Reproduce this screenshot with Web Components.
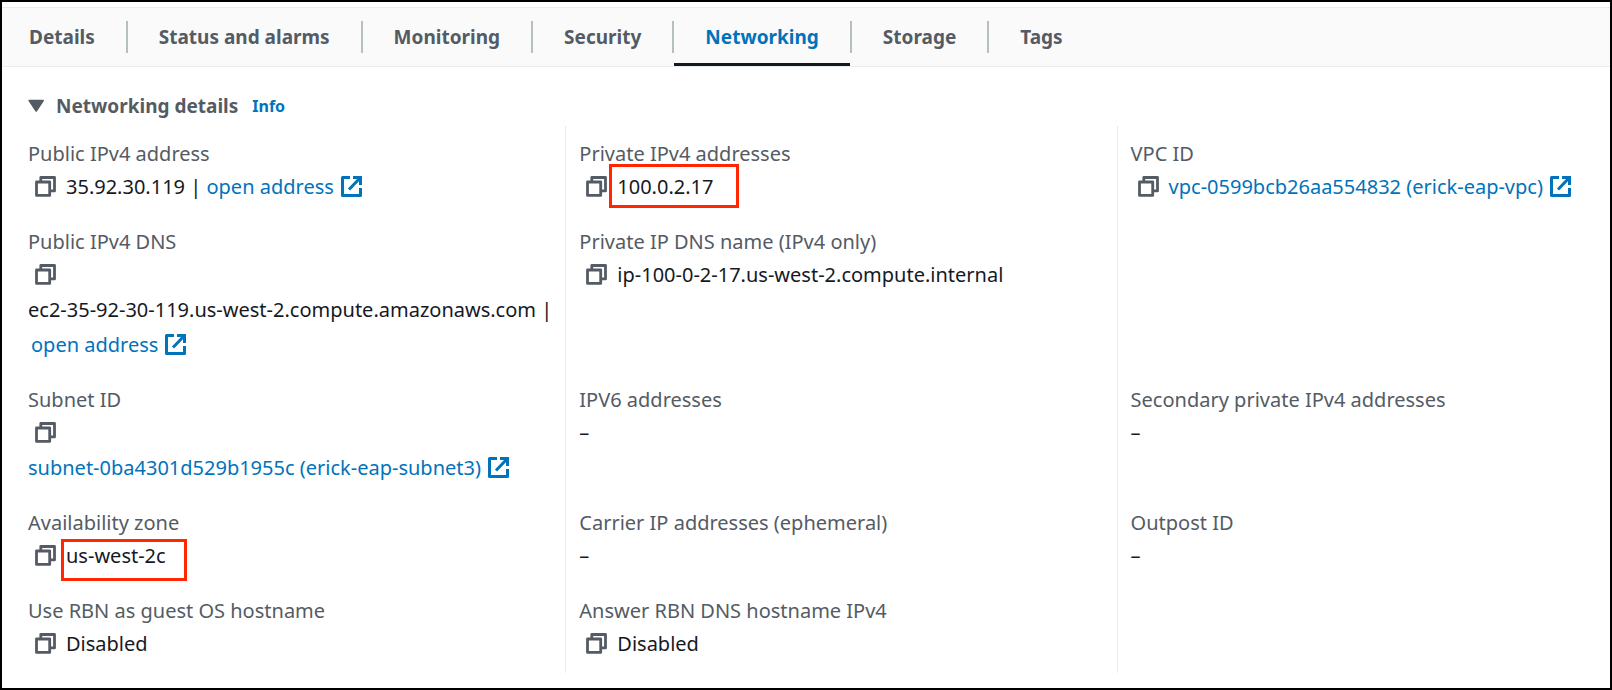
<!DOCTYPE html>
<html lang="en">
<head>
  <meta charset="UTF-8">
  <meta name="viewport" content="width=device-width, initial-scale=1.0">
  <title>Instance networking</title>
  <style>
    :root {
      --text: #16191f;
      --muted: #545b64;
      --link: #0073bb;
      --line: #eaeded;
    }
    body {
      margin: 0;
      font-family: "Noto Sans", "Open Sans", sans-serif;
      font-size: 20px;
      color: var(--text);
      background: #fff;
    }
  </style>
</head>
<body>
  <instance-panel>
    <tab-bar slot="tabs">
      <tab-item>Details</tab-item>
      <tab-item>Status and alarms</tab-item>
      <tab-item>Monitoring</tab-item>
      <tab-item>Security</tab-item>
      <tab-item active>Networking</tab-item>
      <tab-item>Storage</tab-item>
      <tab-item>Tags</tab-item>
    </tab-bar>

    <expandable-section heading="Networking details">
      <detail-columns>
        <detail-column>
          <detail-field label="Public IPv4 address">
            <copy-button></copy-button>
            <span>35.92.30.119 |&nbsp;</span>
            <external-link>open address</external-link>
          </detail-field>
          <detail-field label="Public IPv4 DNS" stacked>
            <copy-button></copy-button>
            <span>ec2-35-92-30-119.us-west-2.compute.amazonaws.com |</span>
            <external-link indent>open address</external-link>
          </detail-field>
          <detail-field label="Subnet ID" stacked>
            <copy-button></copy-button>
            <external-link>subnet-0ba4301d529b1955c (erick-eap-subnet3)</external-link>
          </detail-field>
          <detail-field label="Availability zone">
            <copy-button></copy-button>
            <marked-value class="zone">us-west-2c</marked-value>
          </detail-field>
          <detail-field label="Use RBN as guest OS hostname">
            <copy-button></copy-button>
            <span>Disabled</span>
          </detail-field>
        </detail-column>

        <detail-column>
          <detail-field label="Private IPv4 addresses">
            <copy-button></copy-button>
            <marked-value class="address">100.0.2.17</marked-value>
          </detail-field>
          <detail-field label="Private IP DNS name (IPv4 only)">
            <copy-button></copy-button>
            <span>ip-100-0-2-17.us-west-2.compute.internal</span>
          </detail-field>
          <detail-field label="IPV6 addresses">–</detail-field>
          <detail-field label="Carrier IP addresses (ephemeral)">–</detail-field>
          <detail-field label="Answer RBN DNS hostname IPv4">
            <copy-button></copy-button>
            <span>Disabled</span>
          </detail-field>
        </detail-column>

        <detail-column>
          <detail-field label="VPC ID" class="two-rows">
            <copy-button></copy-button>
            <external-link>vpc-0599bcb26aa554832 (erick-eap-vpc)</external-link>
          </detail-field>
          <detail-field label="Secondary private IPv4 addresses">–</detail-field>
          <detail-field label="Outpost ID">–</detail-field>
        </detail-column>
      </detail-columns>
    </expandable-section>
  </instance-panel>

  <script>
    class InstancePanel extends HTMLElement {
      constructor() {
        super();
        this.attachShadow({ mode: 'open' });
        this.shadowRoot.innerHTML = `
          <style>
            :host {
              display: block;
              box-sizing: border-box;
              min-height: 100vh;
              padding-top: 5px;
              border: 2px solid #000;
            }
          </style>
          <slot name="tabs"></slot>
          <slot></slot>
        `;
      }
    }

    class TabBar extends HTMLElement {
      constructor() {
        super();
        this.attachShadow({ mode: 'open' });
        this.shadowRoot.innerHTML = `
          <style>
            :host {
              display: block;
              background: #fafafa;
              border-top: 1px solid var(--line);
              border-bottom: 1px solid var(--line);
            }
            nav {
              display: flex;
              padding-left: 25px;
            }
            ::slotted(tab-item:first-child) {
              --tab-start: 2px;
            }
            ::slotted(tab-item:last-child) {
              --divider: transparent;
            }
          </style>
          <nav role="tablist"><slot></slot></nav>
        `;
      }
    }

    class TabItem extends HTMLElement {
      constructor() {
        super();
        this.attachShadow({ mode: 'open' });
        this.shadowRoot.innerHTML = `
          <style>
            :host {
              display: flex;
              align-items: center;
              height: 58px;
            }
            button {
              height: 58px;
              padding: 0 31px 0 var(--tab-start, 31px);
              border: 0;
              border-top: 3px solid transparent;
              border-bottom: 3px solid transparent;
              background: none;
              color: var(--muted);
              font: 700 19px/26px "Noto Sans", "Open Sans", sans-serif;
              cursor: pointer;
            }
            :host([active]) button {
              color: var(--link);
              border-bottom-color: var(--text);
            }
            .divider {
              width: 2px;
              height: 32px;
              background: var(--divider, #b4c0c2);
            }
          </style>
          <button type="button" role="tab"><slot></slot></button>
          <span class="divider"></span>
        `;
        this.shadowRoot.querySelector('button')
          .setAttribute('aria-selected', this.hasAttribute('active'));
      }
    }

    class ExpandableSection extends HTMLElement {
      constructor() {
        super();
        this.attachShadow({ mode: 'open' });
        this.isOpen = true;
        this.shadowRoot.innerHTML = `
          <style>
            :host {
              display: block;
              padding: 24px 14px 14px 12px;
            }
            header {
              display: flex;
              align-items: center;
              height: 30px;
              padding-left: 14px;
              margin-bottom: 5px;
            }
            .toggle {
              display: flex;
              align-items: center;
              gap: 12px;
              padding: 0;
              border: 0;
              background: none;
              color: var(--muted);
              font: 700 19px/30px "Noto Sans", "Open Sans", sans-serif;
              cursor: pointer;
            }
            a {
              margin-left: 14px;
              color: var(--link);
              font-size: 16px;
              font-weight: 700;
              line-height: 30px;
              text-decoration: none;
            }
          </style>
          <header>
            <button class="toggle" type="button" aria-expanded="true">
              <svg width="16" height="14" viewBox="0 0 16 14" aria-hidden="true">
                <path d="M1.2 1.5h14l-7 10.5z" fill="currentColor" stroke="currentColor" stroke-width="1.6" stroke-linejoin="round"/>
              </svg>
              <span></span>
            </button>
            <a href="#info">Info</a>
          </header>
          <div class="content"><slot></slot></div>
        `;
        const toggle = this.shadowRoot.querySelector('.toggle');
        toggle.querySelector('span').textContent = this.getAttribute('heading');
        toggle.addEventListener('click', () => this.toggle());
      }

      // Show or hide the section body
      toggle() {
        this.isOpen = !this.isOpen;
        this.shadowRoot.querySelector('.toggle').setAttribute('aria-expanded', this.isOpen);
        this.shadowRoot.querySelector('.content').hidden = !this.isOpen;
      }
    }

    class DetailColumns extends HTMLElement {
      constructor() {
        super();
        this.attachShadow({ mode: 'open' });
        this.shadowRoot.innerHTML = `
          <style>
            :host {
              display: grid;
              grid-template-columns: minmax(0, 46fr) minmax(0, 46fr) minmax(0, 40fr);
              grid-template-rows: repeat(5, auto);
              row-gap: 22px;
            }
            ::slotted(detail-column:not(:first-child)) {
              box-shadow: inset 1px 0 var(--line);
            }
          </style>
          <slot></slot>
        `;
      }
    }

    // Shares its rows with the other columns, so the fields line up
    class DetailColumn extends HTMLElement {
      constructor() {
        super();
        this.attachShadow({ mode: 'open' });
        this.shadowRoot.innerHTML = `
          <style>
            :host {
              display: grid;
              grid-row: 1 / -1;
              grid-template-rows: subgrid;
              padding: 12px 10px 12px 14px;
            }
            ::slotted(.two-rows) {
              grid-row: span 2;
            }
          </style>
          <slot></slot>
        `;
      }
    }

    class DetailField extends HTMLElement {
      constructor() {
        super();
        this.attachShadow({ mode: 'open' });
        this.shadowRoot.innerHTML = `
          <style>
            :host {
              display: block;
              white-space: nowrap;
            }
            .label {
              color: var(--muted);
              line-height: 31px;
            }
            .value {
              display: flex;
              flex-wrap: wrap;
              line-height: 35px;
            }
            :host([stacked]) .value {
              flex-direction: column;
              align-items: flex-start;
            }
          </style>
          <div class="label"></div>
          <div class="value"><slot></slot></div>
        `;
        this.shadowRoot.querySelector('.label').textContent = this.getAttribute('label');
      }
    }

    class CopyButton extends HTMLElement {
      constructor() {
        super();
        this.attachShadow({ mode: 'open' });
        this.shadowRoot.innerHTML = `
          <style>
            :host {
              display: flex;
              align-items: center;
              height: 35px;
              padding: 0 10px 0 7px;
            }
            button {
              display: flex;
              padding: 0;
              border: 0;
              background: none;
              color: var(--muted);
              cursor: pointer;
            }
          </style>
          <button type="button" aria-label="Copy">
            <svg width="21" height="21" viewBox="0 0 21 21" fill="none" stroke="currentColor" stroke-width="2.8" stroke-linejoin="round" aria-hidden="true">
              <path d="M1.5 6h13.2v13.4H1.5z"/>
              <path d="M5.8 6V1.5h13.7v13.4H15"/>
            </svg>
          </button>
        `;
      }
    }

    class ExternalLink extends HTMLElement {
      constructor() {
        super();
        this.attachShadow({ mode: 'open' });
        this.shadowRoot.innerHTML = `
          <style>
            :host {
              display: block;
            }
            :host([indent]) {
              padding-left: 3px;
            }
            a {
              display: flex;
              align-items: center;
              gap: 7px;
              color: var(--link);
              text-decoration: none;
            }
          </style>
          <a href="#open">
            <span><slot></slot></span>
            <svg width="21" height="21" viewBox="0 0 21 21" fill="none" stroke="currentColor" stroke-width="3" aria-hidden="true">
              <path d="M9 1.5H1.5v18h18V12" stroke-linejoin="round"/>
              <path d="M12 1.5h7.5V9M19 2L8 13.5"/>
            </svg>
          </a>
        `;
      }
    }

    // Value with a red frame drawn over it
    class MarkedValue extends HTMLElement {
      constructor() {
        super();
        this.attachShadow({ mode: 'open' });
        this.shadowRoot.innerHTML = `
          <style>
            :host {
              display: block;
              position: relative;
            }
            .frame {
              position: absolute;
              box-sizing: border-box;
              border: 3px solid #ff2600;
              pointer-events: none;
            }
            :host(.address) .frame {
              left: -8px;
              top: -5px;
              width: 130px;
              height: 44px;
            }
            :host(.zone) .frame {
              left: -5px;
              top: 1px;
              width: 126px;
              height: 42px;
            }
          </style>
          <slot></slot>
          <span class="frame"></span>
        `;
      }
    }

    customElements.define('instance-panel', InstancePanel);
    customElements.define('tab-bar', TabBar);
    customElements.define('tab-item', TabItem);
    customElements.define('expandable-section', ExpandableSection);
    customElements.define('detail-columns', DetailColumns);
    customElements.define('detail-column', DetailColumn);
    customElements.define('detail-field', DetailField);
    customElements.define('copy-button', CopyButton);
    customElements.define('external-link', ExternalLink);
    customElements.define('marked-value', MarkedValue);
  </script>
</body>
</html>
